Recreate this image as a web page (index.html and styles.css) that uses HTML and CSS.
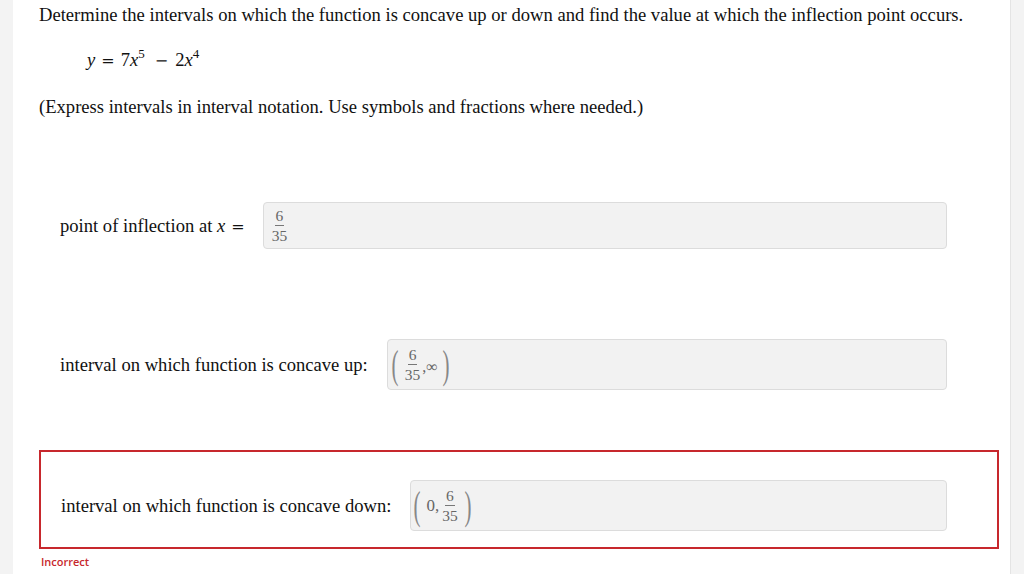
FILE: index.html
```html
<!DOCTYPE html>
<html>
<head>
<meta charset="utf-8">
<link rel="stylesheet" href="styles.css">
</head>
<body>
<div class="page">
  <div class="strip-left"></div>
  <div class="main">
    <p class="title">Determine the intervals on which the function is concave up or down and find the value at which the inflection point occurs.</p>
    <p class="eq"><i>y</i><span class="rel">=</span>7<i>x</i><sup>5</sup><span class="bin">&minus;</span>2<i>x</i><sup>4</sup></p>
    <p class="note">(Express intervals in interval notation. Use symbols and fractions where needed.)</p>

    <div class="row row-1">
      <span class="label">point of inflection at <i>x</i><span class="rel">=</span></span>
      <div class="answer answer-1">
        <span class="frac"><span class="num">6</span><span class="den">35</span></span>
      </div>
    </div>

    <div class="row row-2">
      <span class="label">interval on which function is concave up:</span>
      <div class="answer answer-2">
        <span class="paren">(</span>
        <span class="frac"><span class="num">6</span><span class="den">35</span></span>
        <span class="sep">,∞</span>
        <span class="paren">)</span>
      </div>
    </div>

    <div class="row row-3 wrong">
      <span class="label">interval on which function is concave down:</span>
      <div class="answer answer-3">
        <span class="paren">(</span>
        <span class="zero">0,</span>
        <span class="frac"><span class="num">6</span><span class="den">35</span></span>
        <span class="paren">)</span>
      </div>
    </div>
    <div class="status">Incorrect</div>
  </div>
  <div class="strip-right"></div>
</div>
</body>
</html>
```

FILE: styles.css
```css
html, body {
  margin: 0;
  padding: 0;
  background: #ffffff;
}
body {
  font-family: "Liberation Serif", "Times New Roman", serif;
  font-size: 18.6px;
  color: #111;
}
.page {
  display: flex;
  width: 1024px;
  height: 574px;
  overflow: hidden;
}
.strip-left {
  width: 13px;
  flex: none;
  background: #f3f3f3;
}
.strip-right {
  width: 13px;
  flex: none;
  background: #f3f3f3;
  border-left: 1px solid #e4e4e4;
}
.main {
  flex: 1;
  padding: 0 11px 0 26px;
}
p {
  margin: 0;
  line-height: 20px;
}
.title {
  margin-top: 5px;
}
.eq {
  margin-top: 25px;
  padding-left: 48px;
}
.rel, .bin {
  font-family: "DejaVu Serif", serif;
  font-size: 16px;
}
.rel {
  margin: 0 6px 0 6px;
}
.bin {
  margin: 0 7px 0 10px;
}
sup {
  font-size: 13px;
  line-height: 0;
  vertical-align: 8px;
}
.note {
  margin-top: 26px;
}
.row {
  display: flex;
  align-items: center;
  padding: 0 52px 0 21px;
}
.row-1 { margin-top: 85px; }
.row-2 { margin-top: 90px; }
.row-3 { margin-top: 60px; }
.wrong {
  border: 2px solid #c7282d;
  padding: 28px 50px 16px 20px;
}
.label {
  flex: none;
}
.label .rel {
  margin: 0 0 0 6px;
}
.answer {
  flex: 1;
  display: flex;
  align-items: center;
  box-sizing: border-box;
  background: #f2f2f2;
  border: 1px solid #dcdcdc;
  border-radius: 4px;
  color: #666;
  font-size: 15.5px;
}
.answer-1 {
  margin-left: 18px;
  height: 47px;
  padding-left: 7px;
}
.answer-2 {
  margin-left: 19px;
  height: 51px;
  padding-left: 2px;
}
.answer-3 {
  margin-left: 19px;
  height: 51px;
  padding-left: 1px;
}
.frac {
  display: inline-flex;
  flex-direction: column;
  align-items: center;
  line-height: 14px;
}
.num {
  padding: 0 1px 2px;
  border-bottom: 1px solid #777;
}
.den {
  padding: 3px 1px 0;
}
.paren {
  font-size: 30px;
  line-height: 30px;
  transform: scale(0.7, 1.3);
  color: #888;
}
.answer-2 .paren:first-child { margin-right: 4px; }
.answer-2 .paren:last-child { margin-left: 3px; }
.sep {
  margin-left: 1px;
  margin-top: 4px;
  font-size: 16px;
}
.zero {
  margin-left: 4px;
  margin-right: 2px;
  font-size: 17px;
}
.answer-3 .paren:last-child { margin-left: 4px; }
.status {
  margin-top: 5px;
  margin-left: 2px;
  font-family: "Open Sans", "Noto Sans", sans-serif;
  font-weight: 600;
  font-size: 11px;
  line-height: 15px;
  color: #c7282d;
}
```
